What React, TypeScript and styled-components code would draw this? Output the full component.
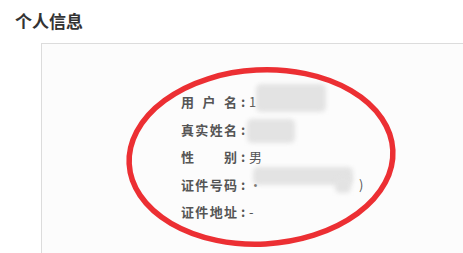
import React from "react";
import styled, { createGlobalStyle } from "styled-components";

const GlobalStyle = createGlobalStyle`
  html, body {
    margin: 0;
    padding: 0;
    background: #fff;
    overflow: hidden;
    font-family: "Noto Sans CJK SC", "Liberation Sans", sans-serif;
  }
`;

const Page = styled.div`
  width: 463px;
  height: 253px;
  overflow: hidden;
`;

const Title = styled.h2`
  margin: 0;
  padding: 9px 0 0 15px;
  height: 43px;
  box-sizing: border-box;
  font-size: 17px;
  font-weight: 700;
  line-height: 24px;
  color: #333;
`;

const Panel = styled.div`
  position: relative;
  margin-left: 41px;
  width: 520px;
  height: 300px;
  box-sizing: border-box;
  border: 1px solid #dcdcdc;
  background: #fcfcfc;
  padding: 44px 0 0 139px;
`;

const InfoList = styled.ul`
  list-style: none;
  margin: 0;
  padding: 0;
`;

const InfoRow = styled.li`
  display: flex;
  align-items: center;
  height: 27.5px;
  font-size: 13px;
  color: #555;
`;

const Label = styled.span`
  display: inline-block;
  width: 56px;
  font-weight: 700;
  text-align: justify;
  text-align-last: justify;
  color: #555;
`;

const Colon = styled.span`
  display: inline-block;
  width: 12px;
  text-align: center;
  font-weight: 700;
`;

const Value = styled.span`
  position: relative;
  display: inline-flex;
  align-items: center;
`;

const Tail = styled.span<{ $gap: number }>`
  margin-left: ${(p) => p.$gap}px;
`;

const Mask = styled.span<{ $left: number; $top: number; $w: number; $h: number }>`
  position: absolute;
  left: ${(p) => p.$left}px;
  top: ${(p) => p.$top}px;
  width: ${(p) => p.$w}px;
  height: ${(p) => p.$h}px;
  background: #e3e3e3;
  border-radius: 5px;
  filter: blur(2px);
`;

const Ring = styled.svg`
  position: absolute;
  left: 80px;
  top: 20px;
  pointer-events: none;
`;

const rows = [
  { label: "用户名", value: "1", masks: [{ l: 7, t: -8, w: 70, h: 28 }] },
  { label: "真实姓名", value: "", masks: [{ l: -2, t: -10, w: 48, h: 24 }] },
  { label: "性别", value: "男", masks: [] },
  { label: "证件号码", value: "·", masks: [{ l: 4, t: -8, w: 100, h: 18 }, { l: 86, t: 2, w: 16, h: 16 }], tail: ")" },
  { label: "证件地址", value: "-", masks: [] },
];

export default function App() {
  return (
    <Page>
      <GlobalStyle />
      <Title>个人信息</Title>
      <Panel>
        <InfoList>
          {rows.map((r) => (
            <InfoRow key={r.label}>
              <Label>{r.label}</Label>
              <Colon>:</Colon>
              <Value>
                {r.value}
                {r.masks.map((m, i) => (
                  <Mask key={i} $left={m.l} $top={m.t} $w={m.w} $h={m.h} />
                ))}
                {r.tail && <Tail $gap={97}>{r.tail}</Tail>}
              </Value>
            </InfoRow>
          ))}
        </InfoList>
        <Ring width="280" height="190" viewBox="0 0 280 190">
          <ellipse
            cx="139"
            cy="93"
            rx="132"
            ry="87"
            fill="none"
            stroke="#ec2f33"
            strokeWidth="5.5"
            transform="rotate(-3 139 93)"
          />
        </Ring>
      </Panel>
    </Page>
  );
}
